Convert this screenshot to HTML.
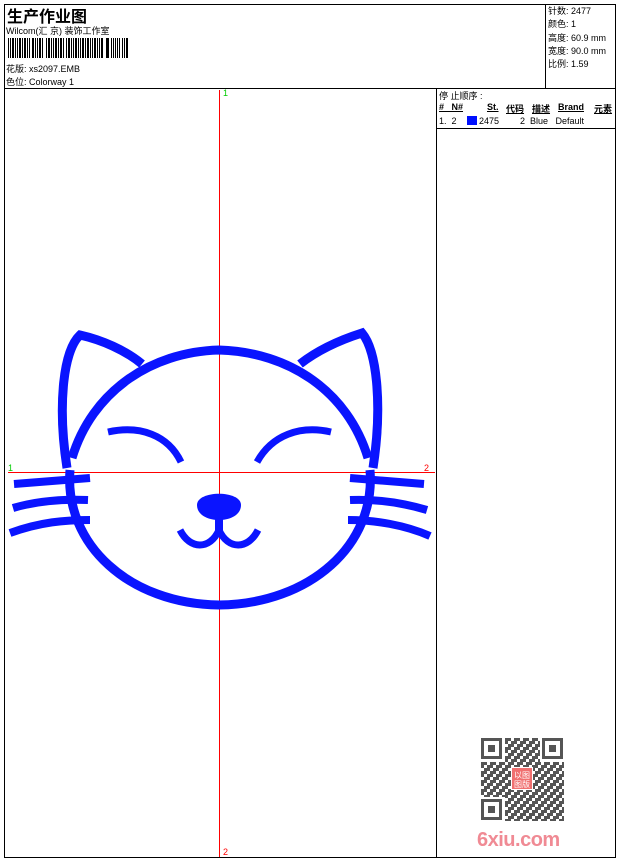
<!DOCTYPE html>
<html><head><meta charset="utf-8"><style>
body{margin:0;background:#fff;width:620px;height:860px;position:relative;overflow:hidden;font-family:"Liberation Sans","WenQuanYi Zen Hei","Noto Sans CJK SC",sans-serif;font-size:9px;color:#000}
.a{position:absolute;white-space:nowrap}
.ln{position:absolute;background:#000}
</style></head><body>
<div class="ln" style="left:4px;top:4px;width:612px;height:1px"></div>
<div class="ln" style="left:4px;top:857px;width:612px;height:1px"></div>
<div class="ln" style="left:4px;top:4px;width:1px;height:854px"></div>
<div class="ln" style="left:615px;top:4px;width:1px;height:854px"></div>
<div class="ln" style="left:4px;top:88px;width:612px;height:1px"></div>
<div class="ln" style="left:545px;top:4px;width:1px;height:84px"></div>
<div class="ln" style="left:436px;top:88px;width:1px;height:770px"></div>
<div class="ln" style="left:436px;top:128px;width:180px;height:1px"></div>

<div class="a" style="left:7px;top:3px;font-size:16px;font-weight:bold">生产作业图</div>
<div class="a" style="left:6px;top:24px;font-size:9px">Wilcom(汇 京) 装饰工作室</div>
<svg class="a" style="left:8px;top:38px" width="124" height="20">
<g fill="#000">
<rect x="0" y="0" width="1" height="20"/><rect x="2" y="0" width="1" height="20"/><rect x="4" y="0" width="2" height="20"/><rect x="7" y="0" width="1" height="20"/><rect x="9" y="0" width="1" height="20"/><rect x="11" y="0" width="2" height="20"/><rect x="14" y="0" width="1" height="20"/><rect x="16" y="0" width="2" height="20"/><rect x="19" y="0" width="1" height="20"/><rect x="21" y="0" width="1" height="20"/><rect x="24" y="0" width="2" height="20"/><rect x="27" y="0" width="1" height="20"/><rect x="29" y="0" width="1" height="20"/><rect x="31" y="0" width="2" height="20"/><rect x="34" y="0" width="1" height="20"/><rect x="38" y="0" width="1" height="20"/><rect x="40" y="0" width="2" height="20"/><rect x="43" y="0" width="1" height="20"/><rect x="45" y="0" width="1" height="20"/><rect x="47" y="0" width="2" height="20"/><rect x="50" y="0" width="1" height="20"/><rect x="52" y="0" width="2" height="20"/><rect x="55" y="0" width="1" height="20"/><rect x="58" y="0" width="1" height="20"/><rect x="60" y="0" width="2" height="20"/><rect x="63" y="0" width="1" height="20"/><rect x="65" y="0" width="1" height="20"/><rect x="67" y="0" width="2" height="20"/><rect x="70" y="0" width="1" height="20"/><rect x="72" y="0" width="1" height="20"/><rect x="74" y="0" width="2" height="20"/><rect x="77" y="0" width="1" height="20"/><rect x="79" y="0" width="2" height="20"/><rect x="82" y="0" width="1" height="20"/><rect x="84" y="0" width="1" height="20"/><rect x="86" y="0" width="2" height="20"/><rect x="89" y="0" width="1" height="20"/><rect x="91" y="0" width="1" height="20"/><rect x="93" y="0" width="2" height="20"/><rect x="98" y="0" width="3" height="20"/><rect x="103" y="0" width="1" height="20"/><rect x="105" y="0" width="1" height="20"/><rect x="107" y="0" width="1" height="20"/><rect x="109" y="0" width="1" height="20"/><rect x="111" y="0" width="1" height="20"/><rect x="114" y="0" width="1" height="20"/><rect x="116" y="0" width="1" height="20"/><rect x="118" y="0" width="2" height="20"/>
</g></svg>
<div class="a" style="left:6px;top:62px">花版: xs2097.EMB</div>
<div class="a" style="left:6px;top:75px">色位: Colorway 1</div>

<div class="a" style="left:548px;top:5px;line-height:13.3px">针数: 2477<br>颜色: 1<br>高度: 60.9 mm<br>宽度: 90.0 mm<br>比例: 1.59</div>

<div class="a" style="left:439px;top:89px">停 止顺序 :</div>
<div class="a" style="left:439px;top:102px;font-weight:bold;text-decoration:underline">#&nbsp;&nbsp;&nbsp;N#</div>
<div class="a" style="left:487px;top:102px;font-weight:bold;text-decoration:underline">St.</div>
<div class="a" style="left:506px;top:102px;font-weight:bold;text-decoration:underline">代码</div>
<div class="a" style="left:532px;top:102px;font-weight:bold;text-decoration:underline">描述</div>
<div class="a" style="left:558px;top:102px;font-weight:bold;text-decoration:underline">Brand</div>
<div class="a" style="left:594px;top:102px;font-weight:bold;text-decoration:underline">元素</div>
<div class="a" style="left:439px;top:116px">1.&nbsp; 2</div>
<div class="a" style="left:467px;top:116px;width:10px;height:9px;background:#0010ff"></div>
<div class="a" style="left:479px;top:116px">2475</div>
<div class="a" style="left:520px;top:116px">2&nbsp; Blue&nbsp;&nbsp; Default</div>

<svg class="a" style="left:0;top:0" width="437" height="858">
<line x1="219.5" y1="90" x2="219.5" y2="857" stroke="#f00" stroke-width="1"/>
<line x1="8" y1="472.5" x2="435" y2="472.5" stroke="#f00" stroke-width="1"/>
<text x="223" y="96" fill="#0c0" font-size="9" font-family="Liberation Sans">1</text>
<text x="223" y="855" fill="#f00" font-size="9" font-family="Liberation Sans">2</text>
<text x="8" y="471" fill="#0c0" font-size="9" font-family="Liberation Sans">1</text>
<text x="424" y="471" fill="#f00" font-size="9" font-family="Liberation Sans">2</text>
<g fill="none" stroke="#0a14ff" stroke-width="9">
<path d="M70,470 C 64,545 130,604 219,605 C 310,604 376,545 370,470"/>
<path d="M72,458 C 92,392 150,352 219,350 C 290,352 348,392 368,458"/>
<path d="M67,468 C 58,410 62,352 80,335 C 102,340 125,350 142,364"/>
<path d="M373,468 C 382,410 378,352 362,333 C 340,340 318,350 300,364"/>
<path d="M108,432 C 140,425 168,435 181,462" stroke-width="7"/>
<path d="M331,432 C 300,425 272,435 257,462" stroke-width="7"/>
<path d="M14,484 L90,478" stroke-width="8"/>
<path d="M13,508 C 40,500 65,499 88,500" stroke-width="8"/>
<path d="M10,533 C 40,522 65,520 90,520" stroke-width="8"/>
<path d="M350,478 L424,484" stroke-width="8"/>
<path d="M350,500 C 375,499 400,502 427,510" stroke-width="8"/>
<path d="M348,520 C 375,520 405,525 430,536" stroke-width="8"/>
<path d="M180,530 C 190,550 210,550 219,530 C 228,550 248,550 258,530" stroke-width="7"/>
</g>
<path d="M197,505 C 197,490 241,490 241,505 C 241,515 230,520 219,520 C 208,520 197,515 197,505 Z" fill="#0a14ff"/>
<rect x="215" y="515" width="8" height="15" fill="#0a14ff"/>
</svg>

<svg class="a" style="left:481px;top:738px" width="83" height="83">
<defs><pattern id="q" width="9" height="9" patternUnits="userSpaceOnUse">
<rect x="0" y="0" width="3" height="3" fill="#555"/><rect x="6" y="0" width="3" height="3" fill="#555"/><rect x="3" y="3" width="3" height="3" fill="#555"/><rect x="0" y="6" width="6" height="3" fill="#555"/><rect x="6" y="3" width="3" height="3" fill="#555"/></pattern></defs>
<rect width="83" height="83" fill="url(#q)"/>
<g fill="#fff"><rect x="0" y="0" width="24" height="24"/><rect x="59" y="0" width="24" height="24"/><rect x="0" y="59" width="24" height="24"/></g>
<g fill="none" stroke="#555" stroke-width="3"><rect x="1.5" y="1.5" width="18" height="18"/><rect x="62.5" y="1.5" width="18" height="18"/><rect x="1.5" y="62.5" width="18" height="18"/></g>
<g fill="#555"><rect x="7" y="7" width="7" height="7"/><rect x="68" y="7" width="7" height="7"/><rect x="7" y="68" width="7" height="7"/></g>
<rect x="30" y="29" width="22" height="23" fill="#fff"/>
<rect x="31" y="30" width="20" height="21" fill="#f07070"/>
<text x="33" y="40" fill="#fff" font-size="8">以</text><text x="41" y="40" fill="#fff" font-size="8">图</text>
<text x="33" y="49" fill="#fff" font-size="8">图</text><text x="41" y="49" fill="#fff" font-size="8">版</text>
</svg>
<div class="a" style="left:477px;top:829px;font-size:20px;font-weight:bold;color:#f08a94;letter-spacing:-0.5px">6xiu.com</div>
</body></html>
